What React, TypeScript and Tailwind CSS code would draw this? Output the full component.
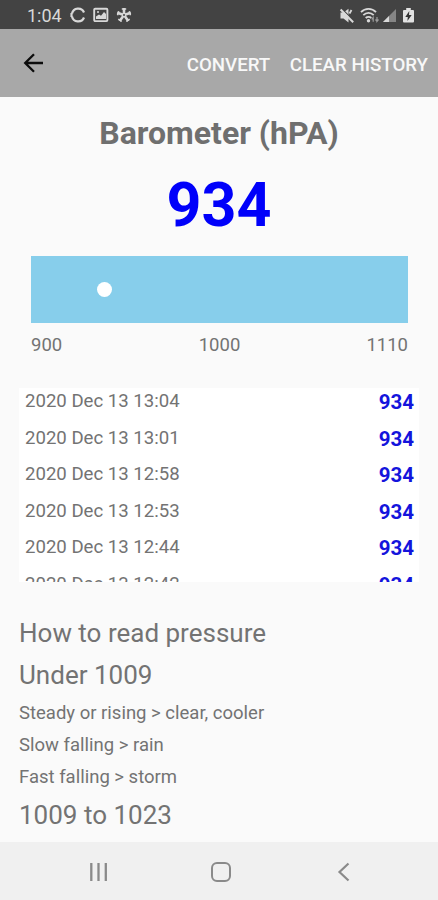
const history = [
  '2020 Dec 13 13:04',
  '2020 Dec 13 13:01',
  '2020 Dec 13 12:58',
  '2020 Dec 13 12:53',
  '2020 Dec 13 12:44',
  '2020 Dec 13 12:42',
];

function StatusBar() {
  return (
    <div className="flex h-[29px] shrink-0 items-center bg-[#434343] pr-[24px] pl-[27px] text-[#d8d8d8]">
      <span className="w-[43px] pt-[2px] text-[18px] leading-[27px]">1:04</span>
      <svg className="mt-[1px] h-[16px] w-[16px]" viewBox="0 0 16 16" fill="none" stroke="currentColor" strokeWidth="2.2">
        <path d="M14 5.5A6.3 6.3 0 0 0 2 6.5M2 9.5a6.3 6.3 0 0 0 12 1" />
        <path d="M1.5 6v4" />
      </svg>
      <svg className="mt-[1px] ml-[7px] h-[16px] w-[16px]" viewBox="0 0 16 16" fill="none" stroke="currentColor" strokeWidth="1.9">
        <rect x="1.2" y="1.7" width="13.2" height="12.4" rx="1" />
        <path d="M3 12V9.5l3-2 2 1.3 3-3.8 2 2V12z" fill="currentColor" stroke="none" />
        <circle cx="5" cy="5" r="1" fill="currentColor" stroke="none" />
      </svg>
      <svg className="mt-[1px] ml-[7px] h-[16px] w-[16px]" viewBox="0 0 16 16" fill="none" stroke="currentColor" strokeWidth="2.6">
        <path d="M8 8V1M8 8L1.2 5.8M8 8l6.8-2.2M8 8l-4.3 6M8 8l4.3 6" />
        <path d="M5.8 2h4.400M1.500 8.200l1.300-4M14.500 8.200l-1.300-4M2.300 12.100l3.400 2.400M13.700 12.100l-3.400 2.400" strokeWidth="1.500" />
        <circle cx="8" cy="8" r="1" fill="#434343" stroke="none" />
      </svg>
      <div className="ml-auto flex items-center pt-[2px]">
        <svg className="h-[16px] w-[16px]" viewBox="0 0 16 16" fill="currentColor">
          <path d="M1.500 4.500h3l5-3.700V14.500L4.500 10.500h-3z" />
          <path d="M10.500 5.500l2-3.500" stroke="currentColor" strokeWidth="1.800" />
          <path d="M3 1l12 12" stroke="#434343" strokeWidth="1.200" />
          <path d="M1.600 1.500l12.600 12.800" stroke="currentColor" strokeWidth="2" />
        </svg>
        <svg className="ml-[5px] h-[16px] w-[20px]" viewBox="0 0 20 16" fill="none" stroke="currentColor" strokeWidth="1.800">
          <path d="M1 4.200C5-.2 12-.2 16 4.200M3.300 7.200c3-3 7.400-3 10.400 0M5.700 10c1.600-1.600 4-1.600 5.600 0" />
          <circle cx="8.500" cy="12.700" r="1.700" fill="currentColor" stroke="none" />
          <path d="M13.200 13.800V9.500l-1.500 1.800M17 9v4.300l1.500-1.800M17 13.300l-1.500-1.800" strokeWidth="1.200" opacity="0.6" />
        </svg>
        <svg className="ml-[3px] h-[16px] w-[14px]" viewBox="0 0 14 16">
          <path d="M0 14L13 1v13z" fill="#858585" />
          <path d="M0 14l6-6v6z" fill="#d8d8d8" />
        </svg>
        <svg className="ml-[6px] h-[16px] w-[11px]" viewBox="0 0 11 16">
          <path d="M3.200 0h4.600v2H10a1 1 0 0 1 1 1v10.500a1 1 0 0 1-1 1H1a1 1 0 0 1-1-1V3a1 1 0 0 1 1-1h2.200z" fill="#e2e2e2" />
          <path d="M6.300 3L2.300 9h2.500l-.4 4 4.300-6H6z" fill="#333" />
        </svg>
      </div>
    </div>
  );
}

function AppBar() {
  return (
    <header className="flex h-[68px] shrink-0 items-center bg-[#a8a8a8] pr-[10px] pl-[23px]">
      <svg className="h-[22px] w-[22px]" viewBox="0 0 22 22" fill="none" stroke="#0c0c0c" strokeWidth="2.300">
        <path d="M20 11H3M11 2.200L2.200 11l8.800 8.800" />
      </svg>
      <div className="ml-auto flex gap-[19.500px] pt-[3px] text-[18.700px] leading-[24px] font-medium whitespace-nowrap text-[#f8f8f8]">
        <button>CONVERT</button>
        <button>CLEAR HISTORY</button>
      </div>
    </header>
  );
}

export default function App() {
  return (
    <div className="flex h-[900px] w-[438px] flex-col overflow-hidden bg-[#fafafa] font-[Roboto,sans-serif] text-[#737373]">
      <StatusBar />
      <AppBar />
      <main className="flex min-h-0 flex-1 flex-col overflow-hidden">
        <h1 className="mt-[16px] text-center text-[32px] leading-[40px] font-bold text-[#6f6f6f]">Barometer (hPA)</h1>
        <div className="mt-[17px] text-center text-[61px] leading-[70px] font-bold text-[#0000fa]">934</div>
        <div className="mx-[31px] mt-[16px] flex h-[67px] w-[377px] shrink-0 items-center bg-[#87ceeb] pl-[66px]">
          <div className="h-[15px] w-[15px] rounded-full bg-white" />
        </div>
        <div className="mr-[30px] ml-[31px] mt-[10px] grid grid-cols-3 text-[18.500px] leading-[24px]">
          <span>900</span>
          <span className="text-center">1000</span>
          <span className="text-right">1110</span>
        </div>
        <div className="mx-[19px] mt-[31px] h-[194px] shrink-0 overflow-hidden bg-white">
          {history.map((time) => (
            <div key={time} className="flex h-[36.500px] justify-between pr-[5px] pl-[6px] leading-[27px]">
              <span className="text-[18.600px]">{time}</span>
              <span className="pt-[1px] text-[20.500px] font-bold text-[#1414dc]">934</span>
            </div>
          ))}
        </div>
        <section className="mt-[35px] pl-[19px]">
          <h2 className="text-[26px] leading-[32px]">How to read pressure</h2>
          <h3 className="mt-[10px] text-[26px] leading-[32px]">Under 1009</h3>
          <p className="mt-[6px] text-[18.500px] leading-[32px]">Steady or rising &gt; clear, cooler</p>
          <p className="text-[18.500px] leading-[32px]">Slow falling &gt; rain</p>
          <p className="text-[18.500px] leading-[32px]">Fast falling &gt; storm</p>
          <h3 className="mt-[6px] text-[26px] leading-[32px]">1009 to 1023</h3>
        </section>
      </main>
      <nav className="flex h-[58px] shrink-0 items-center bg-[#f0f0f0] pt-[2px] pl-[89px] text-[#8a8a8a]">
        <svg className="h-[20px] w-[20px]" viewBox="0 0 20 20" stroke="currentColor" strokeWidth="2.300">
          <path d="M2.300 1v18M9.500 1v18M16.800 1v18" />
        </svg>
        <svg className="ml-[101px] h-[22px] w-[22px]" viewBox="0 0 22 22" fill="none" stroke="currentColor" strokeWidth="2">
          <rect x="2" y="2" width="18" height="18" rx="5" />
        </svg>
        <svg className="ml-[105px] h-[20px] w-[14px]" viewBox="0 0 14 20" fill="none" stroke="currentColor" strokeWidth="2.200">
          <path d="M11.500 1.500L2.500 10l9 8.500" />
        </svg>
      </nav>
    </div>
  );
}
